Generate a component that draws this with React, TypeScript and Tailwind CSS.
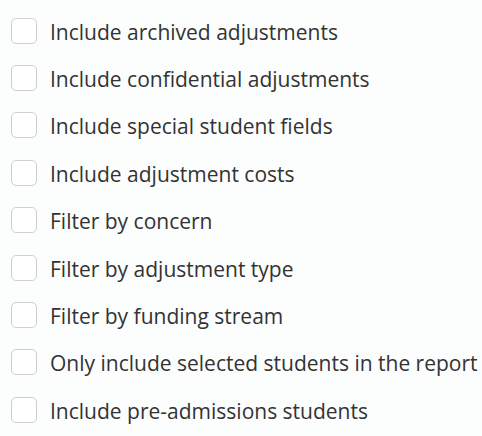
import React from "react";

const items = [
  "Include archived adjustments",
  "Include confidential adjustments",
  "Include special student fields",
  "Include adjustment costs",
  "Filter by concern",
  "Filter by adjustment type",
  "Filter by funding stream",
  "Only include selected students in the report",
  "Include pre-admissions students",
];

export default function App() {
  return (
    <div
      className="w-[482px] h-[436px] bg-[#fcfdfd] pt-[7px] overflow-hidden"
      style={{ fontFamily: '"Open Sans", sans-serif' }}
    >
      {items.map((t) => (
        <label key={t} className="flex items-center h-[47.375px] pl-[11px]">
          <span className="w-[26px] h-[26px] rounded-[5px] border border-[#cfcfcf] bg-white shrink-0" />
          <span className="ml-[13px] text-[21px] text-[#333333] leading-none pt-[3px] whitespace-nowrap">{t}</span>
        </label>
      ))}
    </div>
  );
}
